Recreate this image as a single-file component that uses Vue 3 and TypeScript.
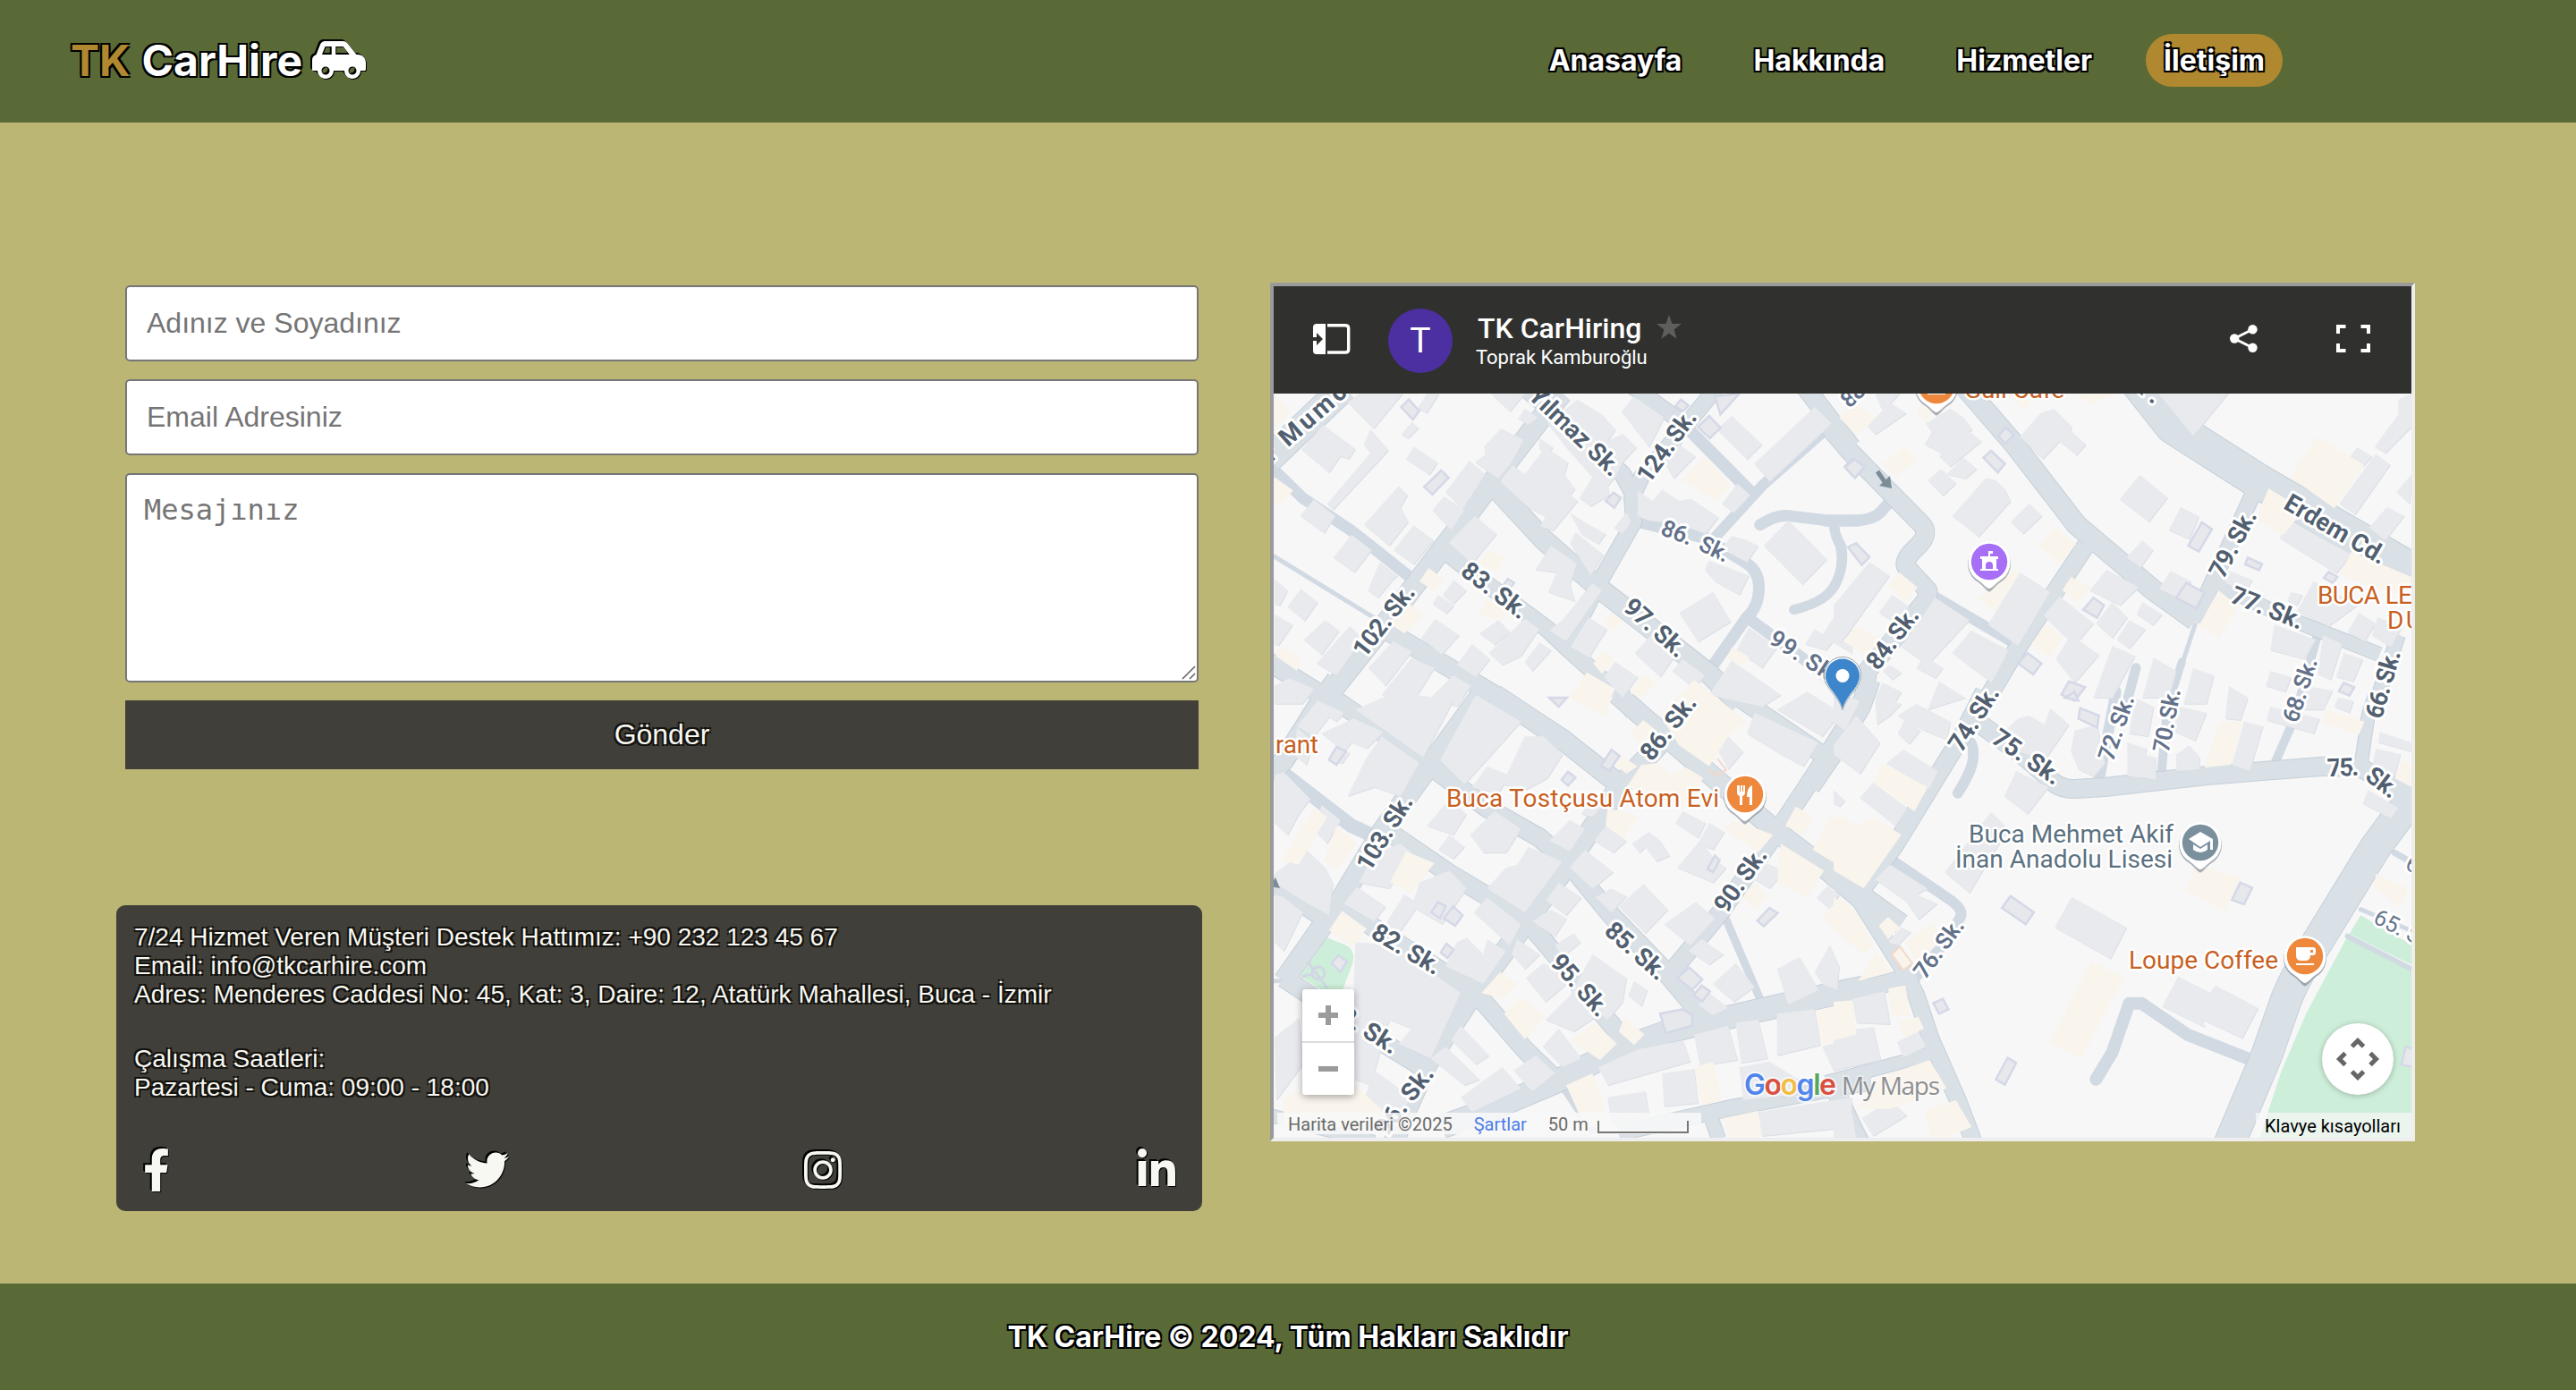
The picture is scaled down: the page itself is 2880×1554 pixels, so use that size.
<script setup lang="ts">
interface Tile {
  name: string
  x: number
  y: number
  roads: [number, string][]
  lanes: [number, string][]
  parks: string
  blocks: string
  shops: string
  sheds: string
}
interface Label { x: number; y: number; angle: number; length: number; text: string; size: number; minor: boolean }

const SX = 660 / 1568
const SY = 1 / 3

const tiles: Tile[] = [
  {
    name: 'nw', x: 1410, y: 300,
    roads: [
      [22, 'M800 420L745 500L615 715L500 910L340 1175L180 1430L150 1480'],
      [18, 'M680 380L830 540L960 690L990 760'],
      [22, 'M612 722L750 910L900 1075L1190 1360L1270 1460'],
      [18, 'M490 950L600 1060L760 1210L810 1270L960 1440L990 1490'],
      [17, 'M1210 400L1100 570L1010 700L985 770L990 850L900 1050L810 1270'],
      [17, 'M980 390L1100 500L1140 550'],
      [20, 'M340 1220L500 1340L660 1460L800 1590'],
      [20, 'M20 1320L160 1430L200 1460'],
      [20, 'M1440 390L1568 600'],
      [30, 'M220 400L20 640'],
    ],
    lanes: [
      [14, 'M1120 520L1300 750'],
      [12, 'M1510 530L1330 730L1200 910'],
      [13, 'M1000 850L1180 905L1290 990Q1325 1020 1322 1080T1290 1170L1190 1350'],
      [13, 'M1290 1170L1420 1290L1510 1380'],
      [13, 'M1325 860Q1370 825 1400 830L1500 845H1590'],
      [11, 'M1522 860Q1524 900 1538 930Q1550 1000 1525 1060Q1500 1120 1415 1145'],
      [13, 'M25 665L110 770L240 880L390 1030'],
      [5, 'M20 955L310 1180'],
    ],
    parks: '',
    blocks: 'M165 525L250 605L232 640L210 630L180 685L108 608ZM230 450L260 420H375L298 538ZM290 540L338 610L190 810L175 790L290 620L272 590ZM400 515L418 535L390 570L372 558ZM440 420H472L440 485L415 470ZM405 598L468 650L447 692L385 640ZM365 730L388 760L370 800L390 850L340 930L273 860ZM405 862L458 912L405 992L352 945ZM140 775L196 830L167 888L104 830ZM240 893L293 945L247 1020L192 970ZM315 985L362 1030L345 1050L310 1105L283 1080ZM553 645L595 690L535 808L490 750ZM485 765L540 810L505 878L455 812ZM637 537L697 575L665 650L630 705L568 650L595 625L592 598ZM568 830L625 890L560 990L498 920ZM668 660L700 690L755 600L815 650L805 690L833 740L820 760L840 780L775 880L742 865L755 830L712 805L635 715ZM740 570L775 600L760 620L738 605ZM760 520L800 480L840 440L905 490L940 540L920 580L960 555L997 600L960 650L940 700L920 730L925 760L875 798L845 770L880 700L810 600ZM610 420H700L660 480ZM700 470L735 500L710 525L683 505ZM820 820L870 860L915 890L895 925L850 890ZM835 885L908 960L875 1030L820 920ZM770 930L838 990L820 1060L833 1117L762 1085L785 1020L728 1010ZM1250 495L1330 590L1290 640L1210 540ZM1470 465L1515 520L1350 715L1310 655ZM990 430L1070 500L1030 600L957 480ZM1110 590L1153 630L1095 705L1070 650ZM1000 745L1040 780L1065 742L1110 780L1140 772L1215 835L1180 890L1105 855L1030 845L1000 830ZM1265 722L1298 760L1255 820L1224 790ZM1400 845L1502 975L1437 1060L1335 930ZM1250 898L1285 910L1320 930L1290 985L1222 940ZM1190 980L1295 1030L1270 1095L1205 1050L1178 1010ZM1200 1085L1247 1185L1160 1252L1110 1155ZM970 820L983 850L960 890L937 870ZM880 1055L905 1080L810 1250L765 1215L800 1180ZM870 1170L918 1210L870 1305L822 1270ZM1040 1225L1098 1300L1060 1370L992 1290ZM1120 1310L1178 1365L1150 1410L1092 1350ZM1250 1315L1380 1430L1330 1470L1190 1430ZM1295 1205L1370 1270L1330 1340L1262 1280ZM1470 1210L1520 1250L1500 1280L1445 1260ZM1568 1080L1490 1230L1568 1290ZM35 1040L70 1080L50 1130L35 1125ZM105 1075L150 1120L115 1182L70 1135ZM35 1160L84 1195L45 1265L35 1260ZM170 1180L207 1215L160 1295L113 1245ZM235 1200L270 1240L200 1365L147 1325ZM462 1175L525 1230L480 1295L425 1240ZM630 1180L662 1220L620 1262L580 1225ZM700 1175L738 1210L690 1300L640 1330L605 1290ZM740 1255L770 1280L720 1350L700 1320ZM560 1260L607 1310L570 1370L520 1330ZM512 1045L545 1080L510 1125L482 1095ZM470 1095L512 1130L492 1157L455 1125ZM350 1250L400 1285L330 1400L285 1340ZM400 1305L460 1340L400 1460L320 1430ZM510 1365L557 1400L520 1470L450 1440ZM75 1375L140 1410L110 1460H35V1400ZM940 1320L1000 1370L960 1440L910 1370Z',
    shops: 'M35 700L85 745L55 792L35 785ZM445 1005L487 1045L460 1082L420 1050ZM600 940L650 970L625 1020L580 990ZM1180 630L1248 730L1212 780L1115 710ZM385 1115L430 1165L380 1225L340 1190ZM600 1110L655 1150L640 1180L580 1165ZM50 1268L107 1310L95 1350L38 1300ZM930 1155L960 1180L935 1215L912 1190ZM910 1285L942 1315L905 1360L882 1325ZM865 1355L940 1410L910 1500L820 1440ZM1250 1270L1298 1305L1270 1335L1240 1305ZM1015 1362L1050 1395L1010 1440L980 1425ZM35 420L78 480L35 540Z',
    sheds: 'M392 440L420 478L403 507L372 465ZM478 678L498 702L455 758L433 733ZM1190 495L1220 535L1192 570L1160 532ZM936 752L955 770L938 803L915 780ZM1115 440L1135 460L1120 480L1100 462ZM1205 430L1270 420L1220 490ZM655 1042L672 1055L655 1080L640 1068ZM1568 640L1550 665L1568 690Z',
  },
  {
    name: 'ne', x: 2050, y: 300,
    roads: [
      [20, 'M-40 490L40 610L235 860Q255 890 225 930Q180 980 195 1005L250 1080Q255 1100 235 1130L90 1350L80 1440'],
      [22, 'M330 370L480 590L645 860L850 1080L960 1180'],
      [19, 'M670 930L490 1270L400 1460L360 1540'],
      [17, 'M1120 740L1000 1070L960 1185'],
      [38, 'M800 370L900 530L1130 715L1560 1030'],
      [15, 'M1020 1060L1200 1170L1450 1295'],
      [15, 'M1500 1230L1440 1460'],
    ],
    lanes: [
      [13, 'M-20 847H50Q110 845 130 810L155 775'],
      [11, 'M0 860Q5 900 20 930Q32 1000 0 1070'],
      [12, 'M260 1095L490 1265'],
      [5, 'M960 1195L925 1330'],
      [9, 'M925 1320L895 1440'],
      [11, 'M803 1340L780 1450'],
      [10, 'M1285 1230L1235 1460'],
    ],
    parks: '',
    blocks: 'M310 470L345 500L368 540L290 622L242 590L260 550L245 520ZM355 540L392 580L310 665L280 630ZM585 472L632 530L630 545L670 590L645 626L600 580L555 640L495 565L550 485ZM285 673L325 720L290 762L250 712ZM345 635L380 672L350 705L300 690ZM405 703L430 710L455 740L470 780L385 900L315 830ZM520 790L553 830L503 890L470 850ZM813 692L887 768L837 850L760 775ZM922 800L970 832L945 908L890 878ZM820 912L848 945L815 1003L778 970ZM850 400L1060 400L955 562ZM1205 840L1375 960L1335 1022L1185 905ZM1440 622L1478 658L1385 825L1343 790ZM1390 600L1430 630L1405 665L1372 632ZM1500 440L1535 420V530L1465 620L1437 598L1500 490ZM1470 800L1515 830L1465 912L1422 870ZM1535 690L1495 750L1530 790ZM95 985L148 1030L20 1255L0 1230V1130ZM495 1020L575 1085L490 1265L410 1195ZM270 1105L360 1180L250 1330L180 1270ZM155 1095L200 1135L165 1190L120 1155ZM365 1215L465 1280L420 1390L315 1290ZM240 1300L290 1340L270 1375L220 1340ZM600 1100L690 1190L640 1265L558 1165ZM725 1010L810 1070L760 1130L680 1080ZM740 1120L780 1170L740 1240L697 1190ZM820 1120L872 1160L848 1197L805 1160ZM785 1180L828 1210L785 1275L752 1245ZM630 1230L705 1295L640 1390L590 1310ZM740 1265L800 1300L740 1440H690ZM850 1305L910 1350L890 1440H820ZM955 1340L1010 1365L990 1460H930ZM1275 1050L1390 1130L1315 1200L1230 1150ZM1215 1085L1245 1095L1230 1130L1205 1115ZM1395 1155L1440 1190L1410 1250L1365 1220ZM1170 1195L1280 1245L1250 1310L1160 1280ZM1300 1230L1350 1260L1320 1380L1285 1360ZM1355 1290L1405 1310L1380 1385L1335 1370ZM1160 1350L1215 1370L1200 1420L1148 1400ZM1250 1400L1325 1415L1300 1480H1240ZM895 1015L950 1050L915 1105L865 1075ZM1050 1015L1112 1045L1095 1080L1040 1055ZM1445 1170L1510 1200L1480 1270L1430 1230ZM150 450L193 485L110 557L90 530ZM110 420H175L130 480ZM280 1385L350 1440L250 1480ZM130 1390L180 1420L160 1460L110 1440ZM150 1330L180 1355L155 1380L130 1350Z',
    shops: 'M55 455L112 500L60 560L15 500ZM190 598L220 640L165 700L132 655ZM1285 565L1410 660L1330 805L1212 700ZM1155 738L1210 780L1230 840L1195 895L1122 840ZM1375 950L1535 1035V1110L1345 1030ZM585 870L645 925L598 992L545 930ZM175 1020L223 1070L195 1120L145 1065ZM485 1010L495 1020L430 1150L385 1110L440 1040ZM630 1035L683 1070L648 1118L607 1080ZM563 1190L610 1240L575 1308L525 1260ZM1022 1080L1075 1130L1025 1240L970 1200ZM60 1200L125 1245L90 1300L25 1250ZM640 420H755L680 455ZM470 430L525 445L505 480ZM235 460L265 480L245 520L220 480Z',
    sheds: 'M55 640L82 665L57 703L30 668ZM458 533L478 560L455 588L438 562ZM418 612L455 655L436 685L398 635ZM60 922L95 968L75 995L38 935ZM978 852L1005 875L970 950L942 930ZM937 1055L985 1088L963 1140L910 1105ZM690 1105L718 1130L700 1172L663 1145ZM1100 970L1138 992L1130 1012L1093 993ZM1315 1018L1338 1035L1325 1055L1302 1038ZM515 1290L552 1325L530 1362L490 1325ZM1355 1390L1383 1405L1370 1433L1342 1418ZM625 1385L668 1405L640 1450L605 1430Z',
  },
  {
    name: 'sw', x: 1410, y: 780,
    roads: [
      [22, 'M200 -60L150 30L60 210L20 260'],
      [20, 'M200 10L440 220L600 370L740 470L820 560L930 730L1060 900L1180 1080'],
      [22, 'M620 -10L800 140L950 290'],
      [22, 'M1180 -20L1040 180L950 300L820 550L700 760L560 1000L440 1230L380 1400L350 1500'],
      [22, 'M930 -30L1010 60L1200 265L1370 450L1568 640L1700 760'],
      [19, 'M1210 -50L1490 190'],
      [19, 'M1600 0L1490 220L1370 450L1220 720L1070 950'],
      [22, 'M590 -20L440 240L320 450L210 680L60 950'],
      [20, 'M350 460L500 590L700 740L780 860L900 1050L985 1180'],
      [16, 'M20 620L170 750'],
      [20, 'M190 680L370 830L570 990L700 1180L790 1290'],
      [20, 'M60 940L250 1100L430 1240'],
      [25, 'M480 1440L620 1375L780 1290L950 1180L1080 1120L1300 1055L1568 980L1610 970'],
      [17, 'M950 1460L1250 1375L1568 1300L1620 1290'],
      [15, 'M1190 1390L1215 1480'],
      [16, 'M1520 1290L1590 1480'],
      [14, 'M20 1400L300 1490'],
    ],
    lanes: [
      [16, 'M45 240L240 430L310 470'],
      [5, 'M30 950H70'],
      [9, 'M1230 730L1330 1025'],
      [9, 'M805 1310L880 1450'],
    ],
    parks: 'M175 805L225 830Q255 850 240 900L215 985L160 980L105 935Z',
    blocks: 'M150 10L220 50L200 80L180 65L140 130L95 95ZM95 100L140 150L120 225L85 190ZM245 70L325 115L280 170L240 150L220 180L160 120ZM200 160L235 185L215 220L180 210ZM320 130L420 220L370 330L300 300L230 330L280 200ZM360 -20L510 10L430 200L330 110L250 40ZM570 -10L690 80L540 290L475 210ZM600 230L660 260L630 320L560 300ZM700 130L750 130L800 190L760 270L700 310L640 290ZM60 250L130 340L100 390L70 460L35 420V260ZM160 360L210 410L175 490L145 450ZM120 510L170 570L190 620L180 730L110 680L35 620V590ZM60 670L110 720L60 850L35 820V660ZM370 490L400 520L340 640L260 620L300 520ZM500 580L545 640L480 760L400 700L420 620ZM255 635L330 700L300 750L220 690ZM380 660L420 690L360 800L320 780ZM500 340L545 390L510 460L440 430ZM620 380L690 440L650 520L590 520L555 460ZM500 460L540 500L510 540L470 510ZM710 500L800 550L700 720L600 640L650 570L680 560ZM820 410L860 440L820 515L765 480ZM880 330L930 330L880 400L850 390ZM860 510L935 585L880 640L820 570ZM915 430L970 480L935 520L885 480ZM1030 450L1060 480L1085 530L1050 550L1020 500L1005 520L985 490ZM1015 625L1080 710L1020 790L950 700ZM930 640L970 665L930 720L888 670ZM1165 480L1210 550L1235 570L1200 620L1105 570ZM1120 380L1180 420L1160 470L1100 420ZM1190 420L1230 450L1200 510L1160 490ZM790 620L850 670L810 730L757 680ZM770 710L810 740L780 800L720 750ZM830 790L848 820L800 870L780 830ZM880 860L970 940L960 1020L920 1080L900 1060L830 1120L755 1080L820 1000L850 930ZM990 950L1025 980L1010 1035L975 1000ZM750 890L830 940L755 1020L703 940ZM680 810L740 860L700 910L665 860ZM600 670L690 760L660 830L565 720ZM520 820L545 805L590 860L600 810L650 850L590 960L490 900ZM250 820L350 830L450 920L530 990L450 1210L365 1160L400 1110L340 1080L290 1300L250 1280L245 1000ZM1155 685L1205 740L1140 830L1070 760ZM1170 810L1228 860L1190 895L1135 850ZM1260 890L1310 970L1255 1020L1200 960ZM1190 990L1240 1040L1200 1065L1160 1030ZM1430 870L1480 980L1400 1030L1370 910ZM1510 830L1535 900L1530 980L1490 960L1470 920ZM1310 50L1480 150L1440 230L1380 190L1290 120ZM1240 130L1280 180L1240 240L1215 180ZM1450 -20L1540 50L1490 130L1370 40ZM1330 550L1390 580L1350 640L1310 610ZM1505 630L1535 670L1510 710L1475 670ZM1370 1060L1470 1045L1485 1165L1370 1200ZM1260 1090L1320 1080L1345 1210L1275 1225ZM1150 1130L1240 1100L1265 1215L1165 1235ZM1000 1180L1120 1150L1140 1220L920 1300L895 1240ZM1065 1260L1150 1245L1160 1360L1070 1370ZM920 1340L1020 1320L1030 1400L930 1430ZM300 1250L400 1340L350 1420L275 1340ZM530 1100L605 1200L570 1230L505 1150ZM490 1170L580 1280L540 1300L450 1210ZM640 1240L690 1310L560 1390L530 1340ZM730 1200L780 1260L720 1320L670 1250ZM35 1140L100 1075L110 1230L40 1350ZM790 1110L850 1210L800 1240L748 1170ZM1490 1170L1568 1140V1230L1520 1250ZM1270 1240L1350 1220L1440 1290L1420 1330L1280 1350ZM1320 1390L1568 1340V1440L1330 1470Z',
    shops: 'M140 370L175 400L100 560L55 545ZM200 430L255 490L200 575L165 550ZM385 515L460 555L400 655L342 620ZM215 715L280 775L245 838L180 780ZM1010 225L1050 220L1090 260L1130 235L1175 270L1120 370L1010 310L970 300ZM920 370L1005 400L960 470L915 430ZM1060 60L1150 -60L1290 80L1240 130L1190 230L1110 160ZM1255 410L1360 460L1320 520L1230 440ZM1380 490L1495 580L1450 670L1370 620ZM1310 620L1345 670L1310 710L1280 670ZM1420 365L1470 400L1440 460L1392 430ZM1510 400L1568 430V590L1465 510ZM635 920L680 960L640 1010L585 990ZM690 1005L755 1070L700 1145L645 1060ZM885 1090L945 1160L900 1215L820 1150ZM965 1070L1018 1130L990 1165L950 1120ZM1150 1240L1200 1220L1225 1350L1170 1365ZM1475 1050L1568 1020V1130L1490 1165ZM880 1260L905 1340L920 1440H860L810 1300ZM60 1340L220 1270L320 1380L330 1440H60ZM1230 1410L1320 1385L1330 1475H1240ZM850 -30L935 0L900 60ZM1535 670L1568 700V800L1490 740ZM950 190L1000 230L970 255L935 220ZM1015 75L1050 110L1010 160L980 120Z',
    sheds: 'M200 165L225 180L200 225L180 208ZM815 248L835 268L815 295L798 275ZM930 175L952 195L925 245L903 228ZM510 700L535 730L515 765L485 740ZM470 685L490 700L475 740L452 720ZM492 825L511 845L495 873L477 855ZM1350 705L1372 722L1335 767L1318 748ZM1137 905L1172 945L1145 980L1105 940ZM1060 1060L1120 1045L1145 1065V1100L1075 1125ZM1170 965L1192 985L1172 1018L1148 998ZM205 865L228 885L210 920L187 890ZM1205 530L1218 545L1200 585L1185 575ZM765 0L790 30L812 0Z',
  },
  {
    name: 'se', x: 2050, y: 780,
    roads: [
      [19, 'M100 -60L75 30L0 190L-60 300'],
      [19, 'M400 -20L340 130L160 500L65 660'],
      [20, 'M380 80L500 190L590 290Q615 310 650 305L720 300L1000 260L1300 230L1400 235L1560 350'],
      [14, 'M1440 -20L1420 60L1400 230'],
      [34, 'M1540 330L1440 500L1270 850Q1220 950 1200 1020L1150 1200L1050 1500'],
      [18, 'M-40 560L70 680L180 900L220 1000L260 1150L330 1350L375 1500'],
      [19, 'M-20 1005L150 955L220 930'],
      [14, 'M-20 1290L230 1205L260 1190'],
      [16, 'M0 1320L80 1500'],
    ],
    lanes: [
      [12, 'M750 -20L705 275'],
      [10, 'M890 -20L870 265'],
      [10, 'M1255 -20L1170 225'],
      [12, 'M360 140Q375 170 370 210T330 320'],
      [12, 'M160 550L300 670Q350 710 335 740L290 830L210 950'],
      [14, 'M697 1280L740 1190L785 1025H818L940 1130L1120 1220'],
      [6, 'M1365 800L1550 920'],
      [5, 'M1400 710L1550 790'],
      [7, 'M1490 520L1560 570'],
    ],
    parks: 'M1365 800L1540 915V1500H1125L1190 1250L1255 1060ZM1400 730L1550 840V905L1370 792Z',
    blocks: 'M60 60L123 150L70 255L0 190V160ZM0 -20L70 10L30 110L0 80ZM110 0L180 20L150 60L115 90ZM185 175L277 245L255 305L140 220ZM105 285L195 370L165 430L70 335ZM220 20L310 80L300 140L240 110L170 60ZM190 70L230 110L200 155L170 120ZM490 70L520 60L560 90L575 35L625 90L560 210L490 180L455 110ZM485 245L570 300L515 390L453 330ZM418 383L463 440L360 655L295 585ZM632 668L778 770L735 875L587 770ZM915 935L1000 990L1015 965L1127 1040L1085 1142L980 1080L985 1105L873 1035ZM640 110L700 90L720 220L690 265L650 240L630 180ZM780 150L830 170L820 270L780 260ZM820 190L855 200V275L795 260ZM945 160L972 200V240L910 245V190ZM920 30L990 50L960 145L900 110ZM800 0L850 30L835 130L785 120ZM1090 80L1140 95L1105 245L1058 225ZM1050 -40L1100 0L1080 75L1040 70ZM1160 30L1290 70L1275 120L1150 75ZM1450 115L1535 150V180L1447 150ZM1440 170L1505 190L1490 260L1430 240ZM1340 0L1380 10L1370 50L1330 30ZM1420 310L1500 370L1480 405L1405 355ZM150 560L250 640L220 660L275 690L225 745L190 680L110 610ZM50 1010L135 985L150 1095L60 1090ZM0 1120L105 1105L125 1215L0 1250ZM225 1120L245 1170L185 1207L168 1155ZM0 1400L50 1395L60 1480H0ZM150 1350L195 1400L105 1470L75 1410ZM180 770L205 785L170 830L145 820ZM0 310L30 345L15 365L0 355ZM0 640L15 660L0 690Z',
    shops: 'M130 220L250 300L215 382L105 285ZM15 390L60 430L105 400L180 460L80 640L0 580V420ZM960 560L1083 605L1038 715L937 650ZM685 882L770 940L657 1212L575 1160ZM1025 80H1088L1055 225L985 235ZM1305 40L1410 80L1395 125L1298 85ZM1440 590L1525 640L1505 700L1437 640ZM0 670L60 720L105 830L80 860L0 780ZM145 735L175 770L145 810L120 765ZM115 850L155 920L65 950ZM145 975L190 965L205 1065L155 1072ZM0 1020L50 1015L60 1130L0 1150ZM225 1070L240 1110L190 1140L170 1090ZM260 760L300 800L220 890L190 820ZM255 1215L300 1310L150 1380L60 1380L130 1270ZM325 1350L367 1440L290 1480H260L240 1385ZM1510 210L1535 220V300L1490 270Z',
    sheds: 'M470 665L532 720L510 760L447 705ZM1080 620L1112 638L1090 693L1058 678ZM462 1208L485 1225L455 1298L431 1280ZM290 1010L305 1045L280 1060L265 1025ZM655 35L705 60L700 100L650 70ZM1520 1170L1540 1180V1240L1508 1230ZM615 0L650 10L640 -20Z',
  },
]

/* Street names follow a straight baseline from one point to another. */
function street(tile: number, x1: number, y1: number, x2: number, y2: number, text: string, minor = false): Label {
  const t = tiles[tile]
  const ax = t.x + x1 * SX
  const ay = t.y + y1 * SY
  const dx = (x2 - x1) * SX
  const dy = (y2 - y1) * SY
  return { x: ax, y: ay, angle: (Math.atan2(dy, dx) * 180) / Math.PI, length: Math.hypot(dx, dy), text, size: minor ? 26 : 28, minor }
}

const streets: Label[] = [
  street(0, 28, 650, 266, 385, 'r Mumcu'),
  street(0, 706, 432, 930, 702, 'Yılmaz Sk.'),
  street(0, 1030, 725, 1160, 500, '124. Sk.'),
  street(0, 1058, 892, 1137, 930, '86.', true),
  street(0, 1158, 943, 1232, 988, 'Sk.', true),
  street(0, 526, 1025, 688, 1180, '83. Sk.'),
  street(0, 958, 1143, 1106, 1310, '97. Sk.'),
  street(0, 1345, 1255, 1518, 1395, '99. Sk.', true),
  street(0, 275, 1310, 412, 1088, '102. Sk.'),
  street(1, 42, 472, 160, 330, '88. Sk.', true),
  street(1, 745, 350, 850, 458, 'Sk.'),
  street(1, 118, 1352, 230, 1165, '84. Sk.'),
  street(1, 1035, 1045, 1126, 828, '79. Sk.'),
  street(1, 1192, 803, 1452, 995, 'Erdem Cd.'),
  street(1, 1050, 1118, 1238, 1212, '77. Sk.'),
  street(3, 1232, 88, 1286, -123, '68. Sk.', true),
  street(3, 1455, 75, 1507, -150, '66. Sk.'),
  street(3, 340, 187, 443, -16, '74. Sk.'),
  street(3, 742, 217, 800, 2, '72. Sk.', true),
  street(3, 890, 187, 922, -25, '70. Sk.', true),
  street(3, 416, 148, 586, 296, '75. Sk.'),
  street(3, 1312, 265, 1396, 260, '75.'),
  street(3, 1408, 272, 1480, 341, 'Sk.'),
  street(3, 243, 948, 350, 765, '76. Sk.', true),
  street(2, 1038, 217, 1160, 18, '86. Sk.'),
  street(2, 288, 587, 406, 348, '103. Sk.'),
  street(2, 1236, 727, 1347, 528, '90. Sk.'),
  street(2, 908, 788, 1054, 952, '85. Sk.'),
  street(2, 765, 890, 895, 1076, '95. Sk.'),
  street(2, 288, 803, 462, 932, '82. Sk.'),
  street(2, 170, 1055, 347, 1198, '82. Sk.'),
  street(2, 333, 1475, 462, 1262, '96. Sk.'),
]

const minorStreets = [
  { x: 2652, y: 1031, angle: 27, text: '65. Sk.' },
  { x: 2688, y: 972, angle: 20, text: '66. Sk.' },
]

const places = [
  { x: 1617, y: 902, w: 305, text: 'Buca Tostçusu Atom Evi', school: false },
  { x: 1426, y: 842, w: 48, text: 'rant', school: false },
  { x: 2380, y: 1083, w: 167, text: 'Loupe Coffee', school: false },
  { x: 2591, y: 675, w: 106, text: 'BUCA LE', school: false },
  { x: 2669, y: 703, w: 39, text: 'DU', school: false },
  { x: 2196, y: 445, w: 112, text: 'Gull Cafe', school: false },
  { x: 2201, y: 942, w: 229, text: 'Buca Mehmet Akif', school: true },
  { x: 2186, y: 970, w: 243, text: 'İnan Anadolu Lisesi', school: true },
]

const pins = [
  { x: 2224, y: 628, color: '#a66ff5', icon: 'castle' },
  { x: 2165, y: 431, color: '#ee883d', icon: 'cup' },
  { x: 1951, y: 888, color: '#ee883d', icon: 'food' },
  { x: 2460, y: 942, color: '#7b909d', icon: 'school' },
  { x: 2577, y: 1069, color: '#ee883d', icon: 'cup' },
]

const links = ['Anasayfa', 'Hakkında', 'Hizmetler', 'İletişim']

const socials = [
  { w: 30, box: '0 0 320 512', d: 'M279.14 288l14.22-92.66h-88.91v-60.13c0-25.35 12.42-50.06 52.24-50.06h40.42V6.26S260.43 0 225.36 0c-73.22 0-121.08 44.38-121.08 124.72v70.62H22.89V288h81.39v224h100.17V288z' },
  { w: 48, box: '0 0 512 512', d: 'M459.37 151.716c.325 4.548.325 9.097.325 13.645 0 138.72-105.583 298.558-298.558 298.558-59.452 0-114.68-17.219-161.137-47.106 8.447.974 16.568 1.299 25.34 1.299 49.055 0 94.213-16.568 130.274-44.832-46.132-.975-84.792-31.188-98.112-72.772 6.498.974 12.995 1.624 19.818 1.624 9.421 0 18.843-1.3 27.614-3.573-48.081-9.747-84.143-51.98-84.143-102.985v-1.299c13.969 7.797 30.214 12.67 47.431 13.319-28.264-18.843-46.781-51.005-46.781-87.391 0-19.492 5.197-37.36 14.294-52.954 51.655 63.675 129.3 105.258 216.365 109.807-1.624-7.797-2.599-15.918-2.599-24.04 0-57.828 46.782-104.934 104.934-104.934 30.213 0 57.502 12.67 76.67 33.137 23.715-4.548 46.456-13.32 66.599-25.34-7.798 24.366-24.366 44.833-46.132 57.827 21.117-2.273 41.584-8.122 60.426-16.243-14.292 20.791-32.161 39.308-52.628 54.253z' },
  { w: 42, box: '0 0 448 512', d: 'M224.1 141c-63.6 0-114.9 51.3-114.9 114.9s51.3 114.9 114.9 114.9S339 319.5 339 255.9 287.7 141 224.1 141zm0 189.6c-41.1 0-74.7-33.5-74.7-74.7s33.5-74.7 74.7-74.7 74.7 33.5 74.7 74.7-33.6 74.7-74.7 74.7zm146.4-194.3c0 14.9-12 26.8-26.8 26.8-14.9 0-26.8-12-26.8-26.8s12-26.8 26.8-26.8 26.8 12 26.8 26.8zm76.1 27.2c-1.7-35.9-9.9-67.7-36.2-93.9-26.2-26.2-58-34.4-93.9-36.2-37-2.1-147.9-2.1-184.9 0-35.8 1.7-67.6 9.9-93.9 36.1s-34.4 58-36.2 93.9c-2.1 37-2.1 147.9 0 184.9 1.7 35.9 9.9 67.7 36.2 93.9s58 34.4 93.9 36.2c37 2.1 147.9 2.1 184.9 0 35.9-1.7 67.7-9.9 93.9-36.2 26.2-26.2 34.4-58 36.2-93.9 2.1-37 2.1-147.8 0-184.8zM398.8 388c-7.8 19.6-22.9 34.7-42.6 42.6-29.5 11.7-99.5 9-132.1 9s-102.7 2.6-132.1-9c-19.6-7.8-34.7-22.9-42.6-42.6-11.7-29.5-9-99.5-9-132.1s-2.6-102.7 9-132.1c7.8-19.6 22.9-34.7 42.6-42.6 29.5-11.7 99.5-9 132.1-9s102.7-2.6 132.1 9c19.6 7.8 34.7 22.9 42.6 42.6 11.7 29.5 9 99.5 9 132.1s2.7 102.7-9 132.1z' },
  { w: 42, box: '0 0 448 512', d: 'M100.28 448H7.4V148.9h92.88zM53.79 108.1C24.09 108.1 0 83.5 0 53.8a53.79 53.79 0 0 1 107.58 0c0 29.7-24.1 54.3-53.79 54.3zM447.9 448h-92.68V302.4c0-34.7-.7-79.2-48.29-79.2-48.29 0-55.69 37.7-55.69 76.7V448h-92.78V148.9h89.08v40.8h1.3c12.4-23.5 42.69-48.3 87.88-48.3 94 0 111.28 61.9 111.28 142.3V448z' },
]

const place = (t: Tile) => `translate(${t.x} ${t.y}) scale(${SX} ${SY})`
</script>

<template>
  <div class="page">
    <header class="navbar">
      <div class="logo">
        <span class="gold">TK</span><span class="brand">CarHire</span>
        <svg class="car" viewBox="0 0 640 512" width="60" height="48"><path fill="#fff" d="M544 192h-16L419.22 56.02A64.025 64.025 0 0 0 369.24 32H155.33c-26.17 0-49.7 15.93-59.42 40.23L48 194.26C20.44 201.4 0 226.21 0 256v112c0 8.84 7.16 16 16 16h48c0 53.02 42.98 96 96 96s96-42.98 96-96h128c0 53.02 42.98 96 96 96s96-42.98 96-96h48c8.84 0 16-7.16 16-16v-80c0-53.02-42.98-96-96-96zM160 432c-26.47 0-48-21.53-48-48s21.53-48 48-48 48 21.53 48 48-21.53 48-48 48zm72-240H116.93l38.4-96H232v96zm48 0V96h89.24l76.8 96H280zm200 240c-26.47 0-48-21.53-48-48s21.53-48 48-48 48 21.53 48 48-21.53 48-48 48z" /></svg>
      </div>
      <nav class="links">
        <a v-for="(l, i) in links" :key="l" :class="{ active: i === 3 }">{{ l }}</a>
      </nav>
    </header>

    <main class="content">
      <section class="left">
        <form class="form">
          <input type="text" placeholder="Adınız ve Soyadınız" />
          <input type="text" placeholder="Email Adresiniz" />
          <div class="area">
            <textarea placeholder="Mesajınız"></textarea>
            <svg class="grip" width="16" height="16" viewBox="0 0 16 16"><path d="M1 15L15 1M9 15L15 9" stroke="#666" stroke-width="1.6" /></svg>
          </div>
          <button type="button">Gönder</button>
        </form>
        <div class="card">
          <p>7/24 Hizmet Veren Müşteri Destek Hattımız: +90 232 123 45 67<br />Email: info@tkcarhire.com<br />Adres: Menderes Caddesi No: 45, Kat: 3, Daire: 12, Atatürk Mahallesi, Buca - İzmir</p>
          <p class="hours">Çalışma Saatleri:<br />Pazartesi - Cuma: 09:00 - 18:00</p>
          <div class="socials">
            <svg v-for="s in socials" :key="s.d" :width="s.w" height="48" :viewBox="s.box"><path :d="s.d" fill="#f8f8f2" /></svg>
          </div>
        </div>
      </section>

      <section class="map">
        <div class="mapbar">
          <svg class="panel" width="42" height="34" viewBox="0 0 42 34">
            <path d="M4 0H14V34H4Q0 34 0 30V4Q0 0 4 0Z" fill="#fff" />
            <path d="M0 15h4v-5l7 7-7 7v-5H0z" fill="#30312e" />
            <path d="M16 1.7H36Q39.7 1.7 39.7 5V29Q39.7 32 36 32H16" fill="none" stroke="#fff" stroke-width="3.4" />
          </svg>
          <div class="avatar">T</div>
          <div class="titles">
            <div class="title">TK CarHiring</div>
            <div class="owner">Toprak Kamburoğlu</div>
          </div>
          <svg class="star" width="28" height="28" viewBox="0 0 24 24"><path fill="#5e5e5c" d="M12 0l3 8.600h9l-7.200 5.600L19.400 23 12 17.700 4.600 23l2.600-8.800L0 8.600h9z" /></svg>
          <svg class="share" width="31" height="31" viewBox="0 0 31 31"><path d="M26 5L5 15.500L26 26" fill="none" stroke="#fff" stroke-width="3" /><g fill="#fff"><circle cx="25.500" cy="5.200" r="5.200" /><circle cx="5.200" cy="15.500" r="5.200" /><circle cx="25.500" cy="25.800" r="5.200" /></g></svg>
          <svg class="full" width="38" height="31" viewBox="0 0 38 31"><path d="M2 10V2H10.500M27.500 2H36V10M36 21V29H27.500M10.500 29H2V21" fill="none" stroke="#fff" stroke-width="4" /></svg>
        </div>
        <div class="canvas">
          <svg width="1272" height="832" viewBox="1424 440 1272 832">
            <rect x="1424" y="440" width="1272" height="832" fill="#f7f7f7" />
            <g v-for="t in tiles" :key="'p' + t.name" :transform="place(t)"><path :d="t.parks" fill="#cdeed8" /></g>
            <g v-for="t in tiles" :key="'l' + t.name" :transform="place(t)" class="ways">
              <path v-for="r in t.lanes" :key="r[1]" :d="r[1]" stroke="#d1d9e3" :stroke-width="r[0]" stroke-linecap="round" />
            </g>
            <g v-for="t in tiles" :key="'c' + t.name" :transform="place(t)" class="ways">
              <path v-for="r in t.roads" :key="r[1]" :d="r[1]" stroke="#c6d0d9" :stroke-width="r[0] + 2" />
            </g>
            <g v-for="t in tiles" :key="'r' + t.name" :transform="place(t)" class="ways">
              <path v-for="r in t.roads" :key="r[1]" :d="r[1]" stroke="#d9e0e6" :stroke-width="r[0]" />
            </g>
            <g v-for="t in tiles" :key="'b' + t.name" :transform="place(t)">
              <path :d="t.blocks" fill="#dcdfe5" transform="translate(2 3)" />
              <path :d="t.blocks" fill="#e8eaee" />
              <path :d="t.shops" fill="#f9f4ec" />
              <path :d="t.sheds" fill="#e6e8ec" stroke="#d5d8e7" stroke-width="2.500" vector-effect="non-scaling-stroke" />
            </g>
            <g fill="none" stroke="#f3d8c8" stroke-width="2"><path d="M1920 848L1930 861L1918 867L1911 860" /><path d="M2124 1058L2138 1077L2128 1085L2115 1067Z" fill="#f9f4ec" /></g>
            <g fill="none" stroke="#d1d7e3" stroke-width="3"><circle cx="1474" cy="1088" r="7" /><path d="M1462 1075L1484 1105M1455 1092L1467 1089" /></g>

            <path d="M2099 527L2108 540" stroke="#7d8d98" stroke-width="5" />
            <path d="M2101 543L2115 546L2113 532Z" fill="#7d8d98" />
            <path d="M1426 981L1431 993L1420 991Z" fill="#7d8d98" />

            <g class="names">
              <text v-for="(s, i) in streets" :key="i" :class="{ small: s.minor }" :transform="`translate(${s.x} ${s.y}) rotate(${s.angle})`" :textLength="s.length" :font-size="s.size" :fill="s.minor ? '#63718a' : '#515f70'">{{ s.text }}</text>
              <text v-for="s in minorStreets" :key="s.text" class="thin" :transform="`translate(${s.x} ${s.y}) rotate(${s.angle})`" font-size="25" fill="#66758c">{{ s.text }}</text>
            </g>
            <g class="places">
              <text v-for="p in places" :key="p.text" :x="p.x" :y="p.y" :textLength="p.w" :fill="p.school ? '#5b7180' : '#c8601f'">{{ p.text }}</text>
            </g>

            <g v-for="p in pins" :key="p.x" :transform="`translate(${p.x} ${p.y})`">
              <path d="M0 32C-3 32 -6 25 -16 19A24 24 0 1 1 16 19C6 25 3 32 0 32Z" fill="#6b7684" opacity=".55" transform="translate(0 1.500)" />
              <path d="M0 30C-3 30 -6 25 -16 18A23.500 23.500 0 1 1 16 18C6 25 3 30 0 30Z" fill="#fff" />
              <circle r="20.200" :fill="p.color" />
              <path v-if="p.icon === 'castle'" d="M-1-12H4V-9H1V-6H10V-3H8V8H10V10H-10V8H-8V-3H-10V-6H-1ZM-4 8H4V4Q4 0 0 0T-4 4Z" fill="#fff" fill-rule="evenodd" />
              <path v-else-if="p.icon === 'food'" d="M-9-10v8q0 3 3 4V12h3V2q3-1 3-4v-8h-2v7h-1v-7h-2v7h-1v-7zM8-10Q2-8 2 3H5V12H8Z" fill="#fff" />
              <path v-else-if="p.icon === 'school'" d="M0-12L14-4V8H11V-2L0 5-13-4ZM-8 2L0 7 8 2V8Q0 14-8 8Z" fill="#fff" />
              <path v-else d="M-10-10H9Q12-10 12-7V-4Q12-1 9-1H6Q6 5 0 5H-4Q-10 5-10-1ZM6-7V-4H9V-7ZM-10 8H10V10H-10Z" fill="#fff" fill-rule="evenodd" />
            </g>

            <path d="M2060 793.500C2056 778 2039.500 770 2039.500 755A20.500 20.500 0 0 1 2080.500 755C2080.500 770 2064 778 2060 793.500Z" fill="#fff" stroke="#9aa3ad" stroke-width="1" />
            <path d="M2060 792C2056 777 2041 769 2041 755.500A19 19 0 0 1 2079 755.500C2079 769 2064 777 2060 792Z" fill="#3d86cb" />
            <circle cx="2060" cy="755.500" r="7.500" fill="#fff" />

            <g class="google" font-size="32">
              <text x="1950" y="1224" textLength="103"><tspan fill="#5085ec">G</tspan><tspan fill="#d95040">o</tspan><tspan fill="#f2bd42">o</tspan><tspan fill="#5085ec">g</tspan><tspan fill="#58a55c">l</tspan><tspan fill="#d95040">e</tspan></text>
              <text class="my" x="2059" y="1224" textLength="110" font-size="28" fill="#8d8f92">My Maps</text>
            </g>
          </svg>

          <div class="zoom">
            <span><svg width="22" height="22" viewBox="0 0 22 22"><path d="M0 8H8V0H14V8H22V14H14V22H8V14H0Z" fill="#9b9b9b" /></svg></span>
            <span><svg width="22" height="6" viewBox="0 0 22 6"><path d="M0 0H22V6H0Z" fill="#9b9b9b" /></svg></span>
          </div>
          <div class="legal">
            <span>Harita verileri ©2025</span><span class="terms">Şartlar</span><span>50 m</span>
            <i class="scale"></i>
          </div>
          <div class="keys">Klavye kısayolları</div>
          <div class="compass">
            <svg width="80" height="80" viewBox="-40 -40 80 80"><g fill="none" stroke="#666" stroke-width="5"><path d="M-6.500-14L0-20.500L6.500-14M-6.500 14L0 20.500L6.500 14M-14-6.500L-20.500 0L-14 6.500M14-6.500L20.500 0L14 6.500" /></g></svg>
          </div>
        </div>
      </section>
    </main>

    <footer class="footer">TK CarHire © 2024, Tüm Hakları Saklıdır</footer>
  </div>
</template>

<style>
body { background: #bcb674; }
</style>

<style scoped>
* { box-sizing: border-box; }
.page {
  width: 2880px; height: 1554px; overflow: hidden;
  display: flex; flex-direction: column;
  background: #bcb674;
  font-family: 'Liberation Sans', Arial, sans-serif;
}
.navbar {
  flex: none; height: 137px; padding: 0 328px 2px 79px;
  display: flex; align-items: center; justify-content: space-between;
  background: #5a6a37;
  font-family: Inter, sans-serif; font-weight: 700; color: #fff;
}
.logo, .links, .footer {
  text-shadow: -2px -2px 0 #000, 2px -2px 0 #000, -2px 2px 0 #000, 2px 2px 0 #000;
}
.logo { display: flex; align-items: center; font-size: 48px; line-height: 58px; }
.gold { color: #b0882f; margin-right: 13px; }
.car { display: block; margin-left: 11px; margin-top: -1px; overflow: visible; }
.car, .socials svg {
  filter: drop-shadow(1.4px 1.4px 0 #000) drop-shadow(-1.4px -1.4px 0 #000);
}
.links { display: flex; gap: 40px; font-size: 32px; line-height: 39px; }
.links a { padding: 10px 20px; border-radius: 30px; }
.links .active { background: #b0882f; }

.content { flex: 1; display: flex; align-items: flex-start; padding: 179px 180px 0 130px; }
.left { width: 1214px; margin-right: 76px; }
.form { display: flex; flex-direction: column; gap: 20px; padding: 3px 4px 0 10px; }
.form input {
  display: block; width: 1200px; height: 85px; padding: 0 22px; margin: 0;
  border: 2px solid #767676; border-radius: 5px; background: #fff;
  font: 32px 'Liberation Sans', Arial, sans-serif; outline: none;
}
.area { position: relative; height: 234px; }
.form textarea {
  display: block; width: 1200px; height: 234px; margin: 0; padding: 20px 18px 18px 19px; resize: none;
  border: 2px solid #767676; border-radius: 5px; background: #fff; outline: none;
  font: 32px/38px 'DejaVu Sans Mono', monospace;
}
.form ::placeholder { color: #757575; opacity: 1; }
.grip { position: absolute; right: 3px; bottom: 3px; }
.form button {
  width: 1200px; height: 77px; border: 0; padding: 0; background: #413f39; color: #f8f8f2;
  font: 32px 'Liberation Sans', Arial, sans-serif;
  text-shadow: -2px -2px 0 #14130f, 2px -2px 0 #14130f, -2px 2px 0 #14130f, 2px 2px 0 #14130f;
}
.card {
  width: 1214px; height: 342px; margin-top: 152px; padding: 20px;
  border-radius: 10px; background: #413f39; color: #f8f8f2;
  font-size: 28px; line-height: 32px;
  text-shadow: -2px -2px 0 #14130f, 2px -2px 0 #14130f, -2px 2px 0 #14130f, 2px 2px 0 #14130f;
}
.card p { margin: 0; }
.card .hours { margin-top: 40px; }
.socials { display: flex; justify-content: space-between; padding: 0 10px; margin-top: 52px; }
.socials svg { display: block; overflow: visible; }

.map {
  width: 1280px; height: 960px; overflow: hidden;
  border: 4px solid; border-color: #9a9a9a #eee #eee #9a9a9a;
  font-family: Roboto, sans-serif;
}
.mapbar { height: 120px; display: flex; background: #30312e; color: #fff; }
.panel { margin: 42px 0 0 44px; }
.avatar {
  width: 72px; height: 72px; margin: 25px 0 0 42px; border-radius: 50%;
  background: #4c2fa1; font-size: 39px; line-height: 73px; text-align: center;
}
.titles { width: 192px; margin: 27px 0 0 26px; }
.title { font-size: 32px; line-height: 40px; font-weight: 500; padding-left: 2px; white-space: nowrap; }
.owner { font-size: 22px; line-height: 26px; white-space: nowrap; }
.star { margin: 32px auto 0 10px; }
.share { margin: 43px 88px 0 0; }
.full { margin: 43px 46px 0 0; }

.canvas { position: relative; height: 832px; }
.canvas > svg { display: block; }
.ways path { fill: none; stroke-linejoin: round; vector-effect: non-scaling-stroke; }
.names text { font-weight: 700; stroke: #fff; stroke-width: 6px; stroke-linejoin: round; paint-order: stroke; }
.names .small { font-weight: 600; }
.names .thin { font-weight: 400; }
.places text { font-size: 28px; stroke: #fff; stroke-width: 5px; stroke-linejoin: round; paint-order: stroke; }
.google text { font-family: Inter, sans-serif; font-weight: 600; stroke: #fff; stroke-opacity: .7; stroke-width: 4px; paint-order: stroke; }
.google .my { font-family: 'Open Sans', sans-serif; font-weight: 500; stroke-opacity: .4; }

.zoom {
  position: absolute; left: 32px; top: 666px; width: 58px; height: 118px;
  display: flex; flex-direction: column; border-radius: 3px; background: #fff;
  box-shadow: 0 2px 8px rgba(0, 0, 0, .35);
}
.zoom span { flex: 1; display: flex; align-items: center; justify-content: center; }
.zoom span + span { border-top: 2px solid #dcdcdc; }
.legal {
  position: absolute; left: 4px; top: 804px; width: 474px; height: 24px; padding-left: 12px;
  display: flex; background: rgba(248, 248, 248, .85); color: #6a6a6a;
  font-size: 20px; line-height: 26px; white-space: nowrap;
}
.terms { color: #4b7de8; margin: 0 24px; }
.scale { width: 102px; height: 14px; margin: 9px 0 0 10px; border: 2px solid #777; border-top: 0; }
.keys {
  position: absolute; right: 0; top: 804px; width: 174px; height: 28px; padding-left: 10px;
  background: rgba(248, 248, 248, .7); color: #000; font-size: 20px; line-height: 30px; white-space: nowrap;
}
.compass {
  position: absolute; left: 1172px; top: 704px; width: 80px; height: 80px; border-radius: 50%;
  background: #fff; box-shadow: 0 1px 6px rgba(0, 0, 0, .25);
}

.footer {
  flex: none; height: 119px; background: #5a6a37; color: #fff;
  display: flex; align-items: center; justify-content: center;
  font: 700 32px/39px Inter, sans-serif;
}
</style>
